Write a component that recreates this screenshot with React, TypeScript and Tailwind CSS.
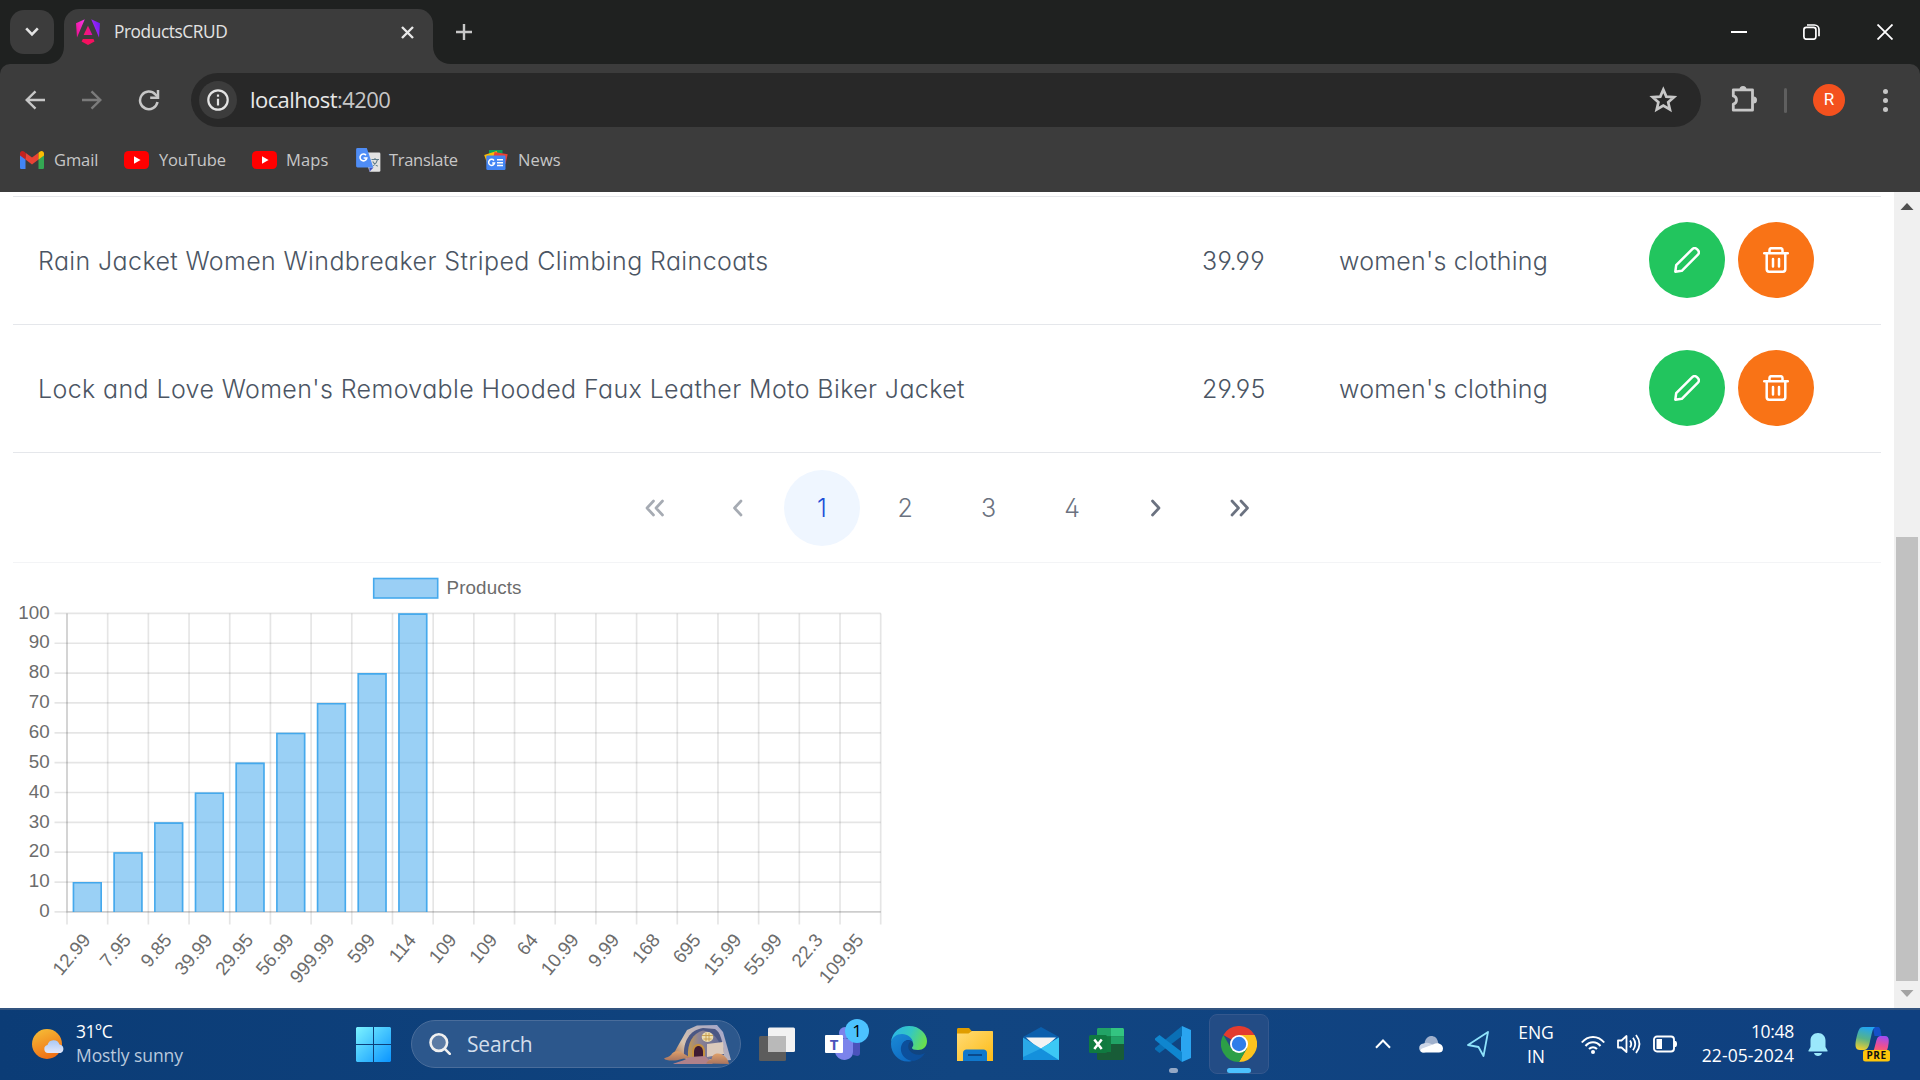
import React from "react";

const UI = "font-['Open_Sans','Noto_Sans',sans-serif]";

/* ---------- Browser chrome ---------- */

function AngularLogo() {
  return (
    <svg className="h-[26px] w-6" viewBox="0 0 24 26">
      <defs>
        <linearGradient id="ng1" x1="0" y1="0.6" x2="1" y2="0.3">
          <stop offset="0" stopColor="#f0149a" />
          <stop offset="0.45" stopColor="#f637e3" />
          <stop offset="0.6" stopColor="#b52cf0" />
          <stop offset="1" stopColor="#6d1af5" />
        </linearGradient>
        <linearGradient id="ng2" x1="0" y1="0" x2="1" y2="0.3">
          <stop offset="0" stopColor="#ff1f4e" />
          <stop offset="1" stopColor="#e30fa8" />
        </linearGradient>
      </defs>
      <path d="M8.8.3 0 4.2l1 14.4L8.8.3Z M15.2.3 24 4.2l-1 14.4L15.2.3Z" fill="url(#ng1)" />
      <path d="M12 6.8 16.4 16H7.6Z" fill="url(#ng2)" />
      <path d="M6.900 20h10.600l1 2.400L12 26l-6.400-3.600Z" fill="#f5105f" />
    </svg>
  );
}

function TabStrip() {
  return (
    <div className="flex h-16 items-start bg-[#1f2120]">
      <button className="mt-[10px] ml-[10px] flex h-11 w-11 items-center justify-center rounded-[14px] bg-[#3c3c3c]">
        <svg className="h-[10px] w-[14px]" viewBox="0 0 14 10" fill="none" stroke="#e3e3e3" strokeWidth="2.6">
          <path d="m1.2 1.4 5.8 5.9 5.8-5.9" />
        </svg>
      </button>
      <svg className="mt-[46px] -ml-[7px] h-[18px] w-[17px]" viewBox="0 0 17 18">
        <path d="M17 0v18H0C10 18 17 11 17 0Z" fill="#3c3c3c" />
      </svg>
      <div className="mt-[9px] flex h-[55px] w-[369px] items-center rounded-t-[15px] bg-[#3c3c3c] pb-[9px]">
        <div className="ml-[12px]">
          <AngularLogo />
        </div>
        <span className="ml-[14px] flex-1 text-[17.3px] tracking-[-0.42px] text-[#e3e3e3]">ProductsCRUD</span>
        <svg className="mr-[19px] h-[13px] w-[13px]" viewBox="0 0 13 13" stroke="#e8e8e8" strokeWidth="2.4">
          <path d="m1 1 11 11M12 1 1 12" />
        </svg>
      </div>
      <svg className="mt-[46px] h-[18px] w-[18px]" viewBox="0 0 18 18">
        <path d="M0 0v18h18C8 18 0 11 0 0Z" fill="#3c3c3c" />
      </svg>
      <svg className="mt-6 ml-[5px] h-4 w-4" viewBox="0 0 16 16" stroke="#c7c7c7" strokeWidth="2.4">
        <path d="M8 0v16M0 8h16" />
      </svg>
      <div className="mt-6 mr-[27px] ml-auto flex">
        <svg className="mr-14 h-4 w-4" viewBox="0 0 16 16">
          <path d="M0 7h16v2H0z" fill="#fff" />
        </svg>
        <svg className="mr-[57px] h-4 w-[17px]" viewBox="0 0 17 16" fill="none" stroke="#fff" strokeWidth="1.7">
          <rect x="0.9" y="3.4" width="12" height="11.8" rx="2.4" />
          <path d="M4 1h7.4A4.6 4.6 0 0 1 16 5.600v6.600" />
        </svg>
        <svg className="h-4 w-4" viewBox="0 0 16 16" stroke="#fff" strokeWidth="1.8">
          <path d="m.5.5 15 15M15.500.5l-15 15" />
        </svg>
      </div>
    </div>
  );
}

function Toolbar() {
  return (
    <div className="flex h-[72px] items-center rounded-t-[10px] bg-[#3c3c3c]">
      <svg className="ml-[25px] h-5 w-5" viewBox="0 0 20 20" fill="none" stroke="#c7c7c7" strokeWidth="2.4">
        <path d="M20 10H2M10.500 1.300 1.700 10l8.800 8.700" />
      </svg>
      <svg className="ml-[37px] h-5 w-5" viewBox="0 0 20 20" fill="none" stroke="#7b7b7b" strokeWidth="2.4">
        <path d="M0 10h18M9.500 1.300 18.300 10l-8.800 8.700" />
      </svg>
      <svg className="ml-[36px] h-[22px] w-[22px]" viewBox="0 0 22 22" fill="none" stroke="#c7c7c7" strokeWidth="2.5">
        <path d="M19.500 13a8.800 8.800 0 1 1-2.200-7.600l2 2" />
        <path d="M20 1v7.800h-7.800" />
      </svg>
      <div className="ml-[31px] flex h-[54px] w-[1510px] items-center rounded-full bg-[#282828] pr-[24px] pl-2">
        <div className="flex h-[38px] w-[38px] items-center justify-center rounded-full bg-[#3c3c3c]">
          <svg className="h-[22px] w-[22px]" viewBox="0 0 22 22" fill="none" stroke="#e3e3e3" strokeWidth="2.2">
            <circle cx="11" cy="11" r="9.700" />
            <path d="M11 9.800V16.500M11 5.500v2.300" />
          </svg>
        </div>
        <span className="ml-[13px] flex-1 pb-px text-[22px] tracking-[-0.58px] text-[#e8e8e8]">
          localhost<span className="text-[#c7c7c7]">:4200</span>
        </span>
        <svg className="h-[28px] w-[28px]" viewBox="0 0 28 28" fill="none" stroke="#c7c7c7" strokeWidth="2.700">
          <path d="m14.300 3.600 3 7 7.600.6-5.700 5 1.700 7.300-6.600-3.900-6.600 3.900 1.700-7.300-5.700-5 7.600-.6Z" />
        </svg>
      </div>
      <svg className="-mt-[3px] ml-[29px] h-7 w-7" viewBox="0 0 28 28">
        <path d="M3.300 4.800h19.200v20.400H3.300v-6.100c2-.5 3.200-2 3.200-4.100s-1.200-3.600-3.200-4.100Z" fill="none" stroke="#c7c7c7" strokeWidth="2.800" strokeLinejoin="round" />
        <path d="M9.500 4.500a3.500 3.500 0 0 1 7 0ZM23.500 11.500a3.500 3.500 0 0 1 0 7Z" fill="#c7c7c7" />
      </svg>
      <div className="ml-[26px] h-[25px] w-[3px] rounded-full bg-[#5f5f5f]" />
      <div className="ml-[26px] flex h-8 w-8 items-center justify-center rounded-full bg-[#f4511e] font-[Roboto] text-[17px] text-white">
        R
      </div>
      <div className="ml-[38px] flex flex-col gap-1">
        <i className="h-[5px] w-[5px] rounded-full bg-[#c7c7c7]" />
        <i className="h-[5px] w-[5px] rounded-full bg-[#c7c7c7]" />
        <i className="h-[5px] w-[5px] rounded-full bg-[#c7c7c7]" />
      </div>
    </div>
  );
}

function GmailIcon() {
  return (
    <svg className="h-[18px] w-6" viewBox="0 0 24 18">
      <path d="M0 2v14.400C0 17.300.7 18 1.600 18H5.500V7Z" fill="#4285f4" />
      <path d="M24 2v14.400c0 .9-.7 1.600-1.600 1.600H18.500V7Z" fill="#34a853" />
      <path d="M5.500 1.700 12 6.600l6.500-4.900v6.900L12 13.400 5.500 8.600Z" fill="#ea4335" />
      <path d="M0 2.500v2l5.500 4.100V1.700L4 .6C2.300-.7 0 .4 0 2.500Z" fill="#c5221f" />
      <path d="M24 2.500v2l-5.500 4.100V1.700L20 .6c1.700-1.300 4-.2 4 1.900Z" fill="#fbbc04" />
    </svg>
  );
}

function YouTubeIcon() {
  return (
    <svg className="h-[18px] w-[25px]" viewBox="0 0 25 18">
      <rect width="25" height="18" rx="4.500" fill="#f00" />
      <path d="m10 5.200 6.600 3.800-6.600 3.800Z" fill="#fff" />
    </svg>
  );
}

function TranslateIcon() {
  return (
    <svg className="h-6 w-[25px]" viewBox="0 0 25 24">
      <path d="M8 4.500h15a1.400 1.400 0 0 1 1.400 1.400v16.500A1.400 1.400 0 0 1 23 23.800h-9.500Z" fill="#e2e2e2" />
      <path d="M13.300 19.500h4.200l-4 4.300Z" fill="#3f51c1" />
      <path d="M1.500 0h9.300l6.500 19.500H1.500A1.400 1.400 0 0 1 .1 18.100V1.400A1.400 1.400 0 0 1 1.500 0Z" fill="#4f8df6" />
      <path d="M10 7.200A3.400 3.400 0 1 0 10.800 10H7.600" fill="none" stroke="#fff" strokeWidth="1.600" />
      <path d="M15.500 11.500H23M19 10v1.500M21.500 11.700c-.6 2.600-2.300 4.800-4.300 6M16.700 13.500c1 2 2.800 3.500 5 4.700" fill="none" stroke="#607d8b" strokeWidth="1.100" />
    </svg>
  );
}

function NewsIcon() {
  return (
    <svg className="h-5 w-6" viewBox="0 0 24 20">
      <path d="M5 0h13.500v6H5Z" fill="#0f9d58" />
      <path d="m.2 5 12.500-4 2 7L3 13Z" fill="#fbbc04" />
      <path d="m10.500 2 13.200 2.200L21.500 14 9 9Z" fill="#ea4335" />
      <rect x="2.300" y="5.500" width="19.200" height="14.500" rx="1.200" fill="#4285f4" />
      <path d="M10 10.500a3 3 0 1 0 .6 2.400H8.200M13 9.800h6M13 12.700h6M13 15.600h6" fill="none" stroke="#fff" strokeWidth="1.500" />
    </svg>
  );
}

function Bookmarks() {
  const cls = "flex items-center text-[16.5px] text-[#c7c7c7]";
  return (
    <div className="flex h-14 items-center bg-[#3c3c3c] pb-2">
      <div className={`${cls} ml-5 w-[104px] gap-[10px] tracking-[-0.1px]`}>
        <GmailIcon />
        Gmail
      </div>
      <div className={`${cls} w-[128px] gap-[10px] tracking-[-0.15px]`}>
        <YouTubeIcon />
        YouTube
      </div>
      <div className={`${cls} w-[104px] gap-[9px] tracking-[0.15px]`}>
        <YouTubeIcon />
        Maps
      </div>
      <div className={`${cls} w-[128px] gap-[8px] tracking-[-0.3px]`}>
        <TranslateIcon />
        Translate
      </div>
      <div className={`${cls} gap-[10px] tracking-[0.1px]`}>
        <NewsIcon />
        News
      </div>
    </div>
  );
}

/* ---------- Page content ---------- */

const rows = [
  { title: "Rain Jacket Women Windbreaker Striped Climbing Raincoats", price: "39.99", category: "women's clothing" },
  { title: "Lock and Love Women's Removable Hooded Faux Leather Moto Biker Jacket", price: "29.95", category: "women's clothing" },
];

function PencilIcon() {
  return (
    <svg className="h-[26px] w-[26px]" viewBox="0 0 26 26" fill="none" stroke="#fff" strokeWidth="2.500" strokeLinejoin="round">
      <path d="M1.300 24.700 2.200 18.200 18.300 2.100c1.400-1.400 3.400-1.200 4.600 0l1 1c1.200 1.200 1.400 3.200 0 4.600L7.800 23.800Z" />
    </svg>
  );
}

function TrashIcon() {
  return (
    <svg className="h-[26px] w-[26px]" viewBox="0 0 26 26" fill="none" stroke="#fff" strokeWidth="2.500" strokeLinecap="round" strokeLinejoin="round">
      <path d="M1.200 6.300h23.600M6.500 6V3c0-1 .8-1.800 1.800-1.800h9.400c1 0 1.800.8 1.800 1.800v3M3.700 6.500v15.800c0 1.300 1 2.400 2.400 2.400h13.800c1.300 0 2.400-1 2.400-2.400V6.500M10 12v7.500M16 12v7.500" />
    </svg>
  );
}

function ProductRows() {
  return (
    <div className="border-t border-[#e5e7eb]">
      {rows.map((r) => (
        <div key={r.title} className="flex h-32 items-center border-b border-[#e5e7eb] pl-[25px] text-[25px] font-[350] text-[#4b5563]">
          <span className="w-[1164px] pt-[2px] tracking-[0.38px]">{r.title}</span>
          <span className="w-[137px] pt-[2px] tracking-[0.25px]">{r.price}</span>
          <span className="w-[310px] pt-[2px] tracking-[0.23px]">{r.category}</span>
          <div className="flex gap-[13px] pb-[2px]">
            <button className="flex h-[76px] w-[76px] items-center justify-center rounded-full bg-[#22c55e]">
              <PencilIcon />
            </button>
            <button className="flex h-[76px] w-[76px] items-center justify-center rounded-full bg-[#f97316]">
              <TrashIcon />
            </button>
          </div>
        </div>
      ))}
    </div>
  );
}

function Angle({ d, color }: { d: string; color: string }) {
  return (
    <svg className="h-5 w-5" viewBox="0 0 20 20" fill="none" stroke={color} strokeWidth="2.700" strokeLinecap="round" strokeLinejoin="round">
      <path d={d} />
    </svg>
  );
}

function Paginator() {
  const cell = "flex h-[76px] w-[76px] items-center justify-center rounded-full";
  return (
    <div className="flex h-[110px] items-center justify-center gap-[7.4px] border-b border-[#f3f4f6] text-[25px] font-[350] text-[#6b7280]">
      <div className={cell}>
        <Angle color="#a6abb3" d="M8.500 3 2 10l6.500 7M17.500 3 11 10l6.500 7" />
      </div>
      <div className={cell}>
        <Angle color="#a6abb3" d="m12 3-6.500 7 6.500 7" />
      </div>
      <div className={`${cell} bg-[#eff6ff] pt-[3px] text-[#1d4ed8]`}>1</div>
      <div className={`${cell} pt-[3px]`}>2</div>
      <div className={`${cell} pt-[3px]`}>3</div>
      <div className={`${cell} pt-[3px]`}>4</div>
      <div className={cell}>
        <Angle color="#6b7280" d="m7.500 3 6.500 7-6.500 7" />
      </div>
      <div className={cell}>
        <Angle color="#6b7280" d="m3 3 6.500 7L3 17M12 3l6.500 7-6.500 7" />
      </div>
    </div>
  );
}

const labels = ["12.99", "7.95", "9.85", "39.99", "29.95", "56.99", "999.99", "599", "114", "109", "109", "64", "10.99", "9.99", "168", "695", "15.99", "55.99", "22.3", "109.95"];
const values = [10, 20, 30, 40, 50, 60, 70, 80, 100];

function Chart() {
  const left = 67;
  const right = 880.7;
  const top = 50.4;
  const bottom = 348.900;
  const step = (right - left) / 20;
  const yOf = (v: number) => bottom - ((bottom - top) * v) / 100;
  return (
    <svg className="-ml-[13px] h-[445px] w-[900px]" viewBox="0 0 900 445" fontFamily="'Liberation Sans', Arial, sans-serif" fontSize="18.800">
      {Array.from({ length: 11 }, (_, i) => (
        <g key={i}>
          <path d={`M54.500 ${yOf(i * 10)}H${right}`} stroke="#000" strokeOpacity="0.1" strokeWidth="1.700" />
          <text x="49.600" y={yOf(i * 10) + 5.2} textAnchor="end" fill="#6c6c6c">
            {i * 10}
          </text>
        </g>
      ))}
      {Array.from({ length: 21 }, (_, i) => (
        <path key={i} d={`M${left + i * step} ${top}V361.500`} stroke="#000" strokeOpacity="0.1" strokeWidth="1.700" />
      ))}
      <path d={`M${left} ${top}V${bottom}H${right}`} fill="none" stroke="#000" strokeOpacity="0.1" strokeWidth="1.700" />
      {values.map((v, i) => {
        const x = left + (i + 0.5) * step - 14.6;
        const y = yOf(v);
        return (
          <g key={i}>
            <rect x={x} y={y} width="29.200" height={bottom - y} fill="#36a2eb" fillOpacity="0.5" />
            <path d={`M${x + 0.75} ${bottom}V${y + 0.75}h27.700V${bottom}`} fill="none" stroke="#36a2eb" strokeOpacity="0.85" strokeWidth="1.600" />
          </g>
        );
      })}
      {labels.map((l, i) => (
        <text key={i} transform={`translate(${left + (i + 0.5) * step - 1} ${373.2}) rotate(-50)`} textAnchor="end" dy="0.350em" fill="#6c6c6c">
          {l}
        </text>
      ))}
      <rect x="373.700" y="15.500" width="64" height="19.500" fill="#9acff5" stroke="#45a9ed" strokeWidth="1.600" />
      <text x="446.500" y="31" fill="#6c6c6c" textLength="75">
        Products
      </text>
    </svg>
  );
}

function Scrollbar() {
  return (
    <div className="flex w-[26px] flex-col items-center bg-[#f0f0f0]">
      <svg className="mt-[11px] h-[7px] w-[14px]" viewBox="0 0 14 7">
        <path d="M7 0l6.500 7H.5Z" fill="#505050" />
      </svg>
      <div className="mt-[327px] h-[444px] w-[22px] bg-[#c1c1c1]" />
      <svg className="mt-[9px] h-[7px] w-[14px]" viewBox="0 0 14 7">
        <path d="M7 7l6.500-7H.5Z" fill="#a3a3a3" />
      </svg>
    </div>
  );
}

/* ---------- Taskbar ---------- */

function Weather() {
  return (
    <div className="flex items-center">
      <svg className="ml-8 h-[30px] w-[34px]" viewBox="0 0 34 30">
        <defs>
          <linearGradient id="sun" x1="0.300" y1="0" x2="0.700" y2="1">
            <stop offset="0" stopColor="#f5b935" />
            <stop offset="1" stopColor="#f06a12" />
          </linearGradient>
          <linearGradient id="cl" x1="0" y1="0" x2="0" y2="1">
            <stop offset="0" stopColor="#a9c8f5" />
            <stop offset="1" stopColor="#e3e8fa" />
          </linearGradient>
        </defs>
        <circle cx="15" cy="15" r="15" fill="url(#sun)" />
        <path d="M16 24a4 4 0 0 1-.5-7.900 6.200 6.200 0 0 1 12-.6A4.400 4.400 0 0 1 28.500 24Z" fill="url(#cl)" />
      </svg>
      <div className="ml-[10px] pb-[2px] text-[17.500px] leading-6">
        <div className="tracking-[-0.6px] text-white">31°C</div>
        <div className="tracking-[-0.08px] text-[#b9c9dd]">Mostly sunny</div>
      </div>
    </div>
  );
}

function SearchBox() {
  return (
    <div className="ml-5 flex h-12 w-[330px] items-center rounded-full border border-[#4a6d9b] bg-[#2c578c] pl-[17px]">
      <svg className="h-[22px] w-[22px]" viewBox="0 0 22 22" fill="none" stroke="#f0f0f0" strokeWidth="2.600" strokeLinecap="round">
        <circle cx="9.800" cy="9.600" r="8.300" fill="#5b7ba5" />
        <path d="m15.800 15.800 5 5" />
      </svg>
      <span className="ml-4 flex-1 pt-px text-[21px] tracking-[-0.15px] text-[#d3deeb]">Search</span>
      <svg className="mr-[9px] h-[39px] w-[67px]" viewBox="0 0 67 39">
        <defs>
          <linearGradient id="rock" x1="0" y1="0.800" x2="1" y2="0.200">
            <stop offset="0" stopColor="#b57d55" />
            <stop offset="0.250" stopColor="#d9c3ae" />
            <stop offset="0.600" stopColor="#b9b2bb" />
            <stop offset="1" stopColor="#a3a6cc" />
          </linearGradient>
          <linearGradient id="wall" x1="0" y1="0" x2="1" y2="0">
            <stop offset="0" stopColor="#c79a4c" />
            <stop offset="0.300" stopColor="#8f8494" />
            <stop offset="1" stopColor="#5d6795" />
          </linearGradient>
          <linearGradient id="sand" x1="0" y1="0" x2="0" y2="1">
            <stop offset="0" stopColor="#e0a06a" />
            <stop offset="1" stopColor="#a8745f" />
          </linearGradient>
        </defs>
        <path d="M10 28 15 19 23 5 33 .500 53 0 59 7 67 35 58 36 22 34Z" fill="url(#rock)" />
        <path d="M20 31C19 16 26 5 39 3l12 1c5 3 8 12 9 26L40 36Z" fill="#4b5784" />
        <path d="M24 32C23 18 29 8 39 5.500c10 1 17 8 20 24l-18 6Z" fill="url(#wall)" />
        <path d="M43 19 59 17 60 29 43 32Z" fill="#dccabb" />
        <ellipse cx="43.500" cy="12" rx="5.800" ry="5" fill="#ecdcae" />
        <path d="M38 10.500h11M39.500 14h8M42 8v8M45 8v8" stroke="#c59a4a" strokeWidth="0.900" />
        <path d="M28 33v-6c0-11 13-11 13 0v6Z" fill="#c5903f" />
        <path d="M30 33v-6c0-8 9-8 9 0v6Z" fill="#3f1a33" />
        <path d="M9 39c3-2 12-3 16-7l16-1 8 8Z" fill="#b0818a" />
        <path d="M0 33.500c3-1.500 6-1.500 8-5 3-3 8-3 11 0 3 1 5 3 7 4.500-8 0-12 3-18 2.500C4 35.500 1 35 0 33.500Z" fill="url(#sand)" />
        <path d="M42 38.500c2-3 4-4 6-5 0-5 6-6 10-4 3 2 6 4 7 9.500Z" fill="url(#sand)" />
      </svg>
    </div>
  );
}

function AppIcon({ className, children }: { className: string; children: React.ReactNode }) {
  return (
    <svg className={`h-9 w-9 shrink-0 ${className}`} viewBox="0 0 36 36">
      {children}
    </svg>
  );
}

function TaskApps() {
  return (
    <>
      <AppIcon className="ml-[18px]">
        <rect x="0" y="10" width="27" height="25" rx="1.500" fill="#5c5c5c" />
        <rect x="9" y="1.500" width="27" height="24.500" rx="1.500" fill="#f2f2f2" />
        <path d="M9 10h18v16H9Z" fill="#b9b9b9" />
      </AppIcon>
      <svg className="mb-[10px] ml-[30px] h-[43px] w-[45px] shrink-0" viewBox="0 0 45 43">
        <path d="M24 17h11v18c0 4-4 3-7 2Z" fill="#4b53bc" />
        <circle cx="20" cy="15" r="6" fill="#7b83eb" />
        <path d="M10 21h18v13c0 10-16 11-18 0Z" fill="#7b83eb" />
        <rect x="0" y="17" width="18" height="18" rx="1" fill="#fff" />
        <text x="9" y="31.500" textAnchor="middle" fontSize="15" fontWeight="700" fill="#4b53bc" fontFamily="'Open Sans'">
          T
        </text>
        <circle cx="32" cy="13" r="12" fill="#4cc2ff" />
        <text x="32" y="19" textAnchor="middle" fontSize="17" fill="#000" fontFamily="'Open Sans'">
          1
        </text>
      </svg>
      <AppIcon className="ml-[21px]">
        <defs>
          <linearGradient id="e1" x1="0" y1="0.300" x2="1" y2="0.600">
            <stop offset="0" stopColor="#2bb5e8" />
            <stop offset="0.500" stopColor="#35c8c0" />
            <stop offset="1" stopColor="#6be04a" />
          </linearGradient>
          <linearGradient id="e2" x1="0" y1="0" x2="0.600" y2="1">
            <stop offset="0" stopColor="#1a8ad6" />
            <stop offset="1" stopColor="#0f6cc4" />
          </linearGradient>
        </defs>
        <path d="M0 16C1 6 9 0 18 0c11 0 18 8 18 15 0 6-4 9-9 9-4 0-6-1-6-2s2-2 1-5c-1-4-5-7-11-7C6 10 2 12 0 16Z" fill="url(#e1)" />
        <path d="M0 18c0-7 6-10 11-10 6 0 10 4 11 8-2-2-6-3-9 0-4 4-2 14 8 19-11 3-21-6-21-17Z" fill="url(#e2)" />
        <path d="M14 15c-8 5-4 20 9 20 4-1 8-3 11-8-5 3-12 2-15-2-3-3-2-8 1-10-2-1-4-1-6 0Z" fill="#0c4f9c" />
      </AppIcon>
      <AppIcon className="ml-[30px]">
        <path d="M0 3.500C0 2.500.7 2 1.500 2H12l3.500 4L12 8H0Z" fill="#e09d00" />
        <path d="M0 7.500h11.500L15 5h20c.6 0 1 .4 1 1v29H0Z" fill="url(#fold)" />
        <path d="M6 35v-8c0-2 1.500-3.500 3.500-3.500h17c2 0 3.500 1.500 3.500 3.500v8Z" fill="#1078cc" />
        <path d="M11 29h14" stroke="#0a4a8c" strokeWidth="2" />
        <defs>
          <linearGradient id="fold" x1="0" y1="0" x2="1" y2="1">
            <stop offset="0" stopColor="#ffdb75" />
            <stop offset="1" stopColor="#fdbb16" />
          </linearGradient>
        </defs>
      </AppIcon>
      <AppIcon className="ml-[30px]">
        <path d="M0 11 18 1l18 10-9 8H9Z" fill="#0b5fad" />
        <path d="M3 11.500h30L18 25Z" fill="#f3f3f3" />
        <path d="M0 11.500 18 22.500l18-11V34H0Z" fill="#2aa9e8" />
        <path d="M18 22.500 36 34H0V31Z" fill="#1490dc" />
        <path d="M18 22.500l18-11V34Z" fill="#3cc8f5" />
      </AppIcon>
      <AppIcon className="ml-[30px]">
        <rect x="8" y="2" width="27" height="32" rx="1.500" fill="#185c37" />
        <path d="M8 3.500C8 2.500 8.700 2 9.500 2H22v8.500H8Z" fill="#21a366" />
        <path d="M22 2h11.500c.8 0 1.500.6 1.500 1.500v7H22Z" fill="#33c481" />
        <path d="M22 10.500h13V18H22Z" fill="#21a366" />
        <path d="M8 10.500h14V26H8Z" fill="#107c41" />
        <rect x="0" y="9" width="18" height="18" rx="1.500" fill="#0f7a40" />
        <path d="m5.300 13.500 7.400 9.600M12.700 13.500l-7.400 9.600" stroke="#fff" strokeWidth="2.500" />
      </AppIcon>
      <div className="ml-[30px] flex h-[60px] flex-col items-center pt-3">
        <AppIcon className="">
          <path d="M27 0 36 4v28l-9 4-1-10V10Z" fill="#2aa5f0" />
          <path d="M27 0v10L4.500 27 0 23.500V22Z" fill="#0a6fb5" />
          <path d="M27 36V26L4.500 9 0 12.500V14Z" fill="#0f86cf" />
        </AppIcon>
        <div className="mt-[6px] h-[5px] w-[9px] rounded-full bg-[#95a8c5]" />
      </div>
      <div className="ml-[18px] flex h-[60px] w-[60px] flex-col items-center rounded-lg border border-[#34588e] bg-[#234c85] pt-[11px]">
        <AppIcon className="">
          <path d="M18 18 2.400 9A18 18 0 0 1 33.600 9Z" fill="#e33b2e" />
          <path d="M18 9h15.600A18 18 0 0 1 18 36l7.800-13.500Z" fill="#fcc31e" />
          <path d="M10.200 22.500 2.400 9A18 18 0 0 0 18 36l7.800-13.500Z" fill="#2c9f47" />
          <circle cx="18" cy="18" r="9" fill="#fff" />
          <circle cx="18" cy="18" r="7.200" fill="#2f7de9" />
        </AppIcon>
        <div className="mt-[6px] h-[5px] w-6 shrink-0 rounded-full bg-[#4cc2ff]" />
      </div>
    </>
  );
}

function Tray() {
  return (
    <div className="ml-auto flex items-center text-[17.500px] leading-6 text-white">
      <svg className="h-[10px] w-4" viewBox="0 0 16 10" fill="none" stroke="#fff" strokeWidth="2">
        <path d="m1 8.800 7-7.300 7 7.300" />
      </svg>
      <svg className="ml-7 h-[18px] w-6" viewBox="0 0 24 18">
        <path d="M6 14C4 6 8 1 12 1c4 0 6 2 7 6l1 6Z" fill="#9fb0cc" />
        <path d="M5 17.500c-6 0-6.500-8.500-.5-9 4-2 7 0 9 1l7 4Z" fill="#ccd5e6" />
        <path d="M4 17.500c-3 0-3-3-1-4L14 9.500c5-3 10 0 10 4 0 3-2 4-4 4Z" fill="#fff" />
      </svg>
      <svg className="ml-6 h-[26px] w-[22px]" viewBox="0 0 22 26" fill="none" stroke="#8fe3fb" strokeWidth="1.800" strokeLinejoin="round">
        <path d="M21 1 1 14l10.500 2L16.500 25Z" />
      </svg>
      <div className="ml-[28px] w-[38px] text-center tracking-[-0.1px]">
        <div>ENG</div>
        <div>IN</div>
      </div>
      <svg className="ml-[26px] h-[19px] w-6" viewBox="0 0 24 19" fill="none" stroke="#fff" strokeWidth="2">
        <path d="M.8 7.500c6-7.500 16.400-7.500 22.400 0M4.500 11c4.200-5 10.800-5 15 0M8 14c2.400-2.500 5.600-2.500 8 0" />
        <circle cx="12" cy="17" r="2" fill="#fff" stroke="none" />
      </svg>
      <svg className="ml-3 h-5 w-6" viewBox="0 0 24 20" fill="none" stroke="#fff" strokeWidth="1.800" strokeLinejoin="round">
        <path d="M1 6.500h3.500L9.500 2v16l-5-4.500H1ZM13 6.500q2.500 3.500 0 7M16 3.800q4.500 6.200 0 12.400M19 1q7 9 0 18" />
      </svg>
      <svg className="ml-3 h-[18px] w-6" viewBox="0 0 24 18" fill="none" stroke="#fff" strokeWidth="1.900">
        <rect x="1" y="1.500" width="20" height="15" rx="3" />
        <path d="M3.500 4h5.500v10H3.500Z" fill="#fff" stroke="none" />
        <path d="M21 6h1.500c2 0 2 6 0 6H21Z" fill="#fff" stroke="none" />
      </svg>
      <div className="ml-5 w-[97px] pb-[3px] text-right">
        <div className="tracking-[-0.3px]">10:48</div>
        <div className="tracking-[0.1px]">22-05-2024</div>
      </div>
      <svg className="ml-[14px] h-[23px] w-5" viewBox="0 0 20 23" fill="#9be8fb">
        <path d="M10 0c4.500 0 7.500 3.300 7.500 7.500V14l2 3.500c.2.600 0 1-.7 1H1.200c-.7 0-.9-.4-.7-1L2.500 14V7.500C2.500 3.300 5.500 0 10 0ZM6 20h8c-.6 4-7.400 4-8 0Z" />
      </svg>
      <svg className="mr-[30px] ml-[27px] h-[35px] w-[35px]" viewBox="0 0 35 35">
        <defs>
          <linearGradient id="c1" x1="0.500" y1="0" x2="0.300" y2="1">
            <stop offset="0" stopColor="#22a5f0" />
            <stop offset="0.500" stopColor="#57b389" />
            <stop offset="1" stopColor="#f3cf2c" />
          </linearGradient>
          <linearGradient id="c2" x1="0.500" y1="0" x2="0.300" y2="1">
            <stop offset="0" stopColor="#a24df0" />
            <stop offset="0.500" stopColor="#ee4f8f" />
            <stop offset="1" stopColor="#ff7b4a" />
          </linearGradient>
        </defs>
        <path d="M18 0h5c2 0 2.500 2 3.500 9h-7Z" fill="#1450c8" />
        <path d="M8 0h12c-3 2-3 7-5 14-1 6-3 9-6 9H5c-5 0-5-5-4-10C3 4 4 0 8 0Z" fill="url(#c1)" />
        <path d="M26 9h4c5 0 4 6 3 11-1 4-3 8-6 8H14c5-2 5-6 7-13 1-4 2-6 5-6Z" fill="url(#c2)" />
        <rect x="8" y="23" width="27" height="11.500" rx="2.500" fill="#fdc60b" />
        <text x="21.500" y="32.300" textAnchor="middle" fontSize="10" fontWeight="700" letterSpacing="0.500" fill="#111" fontFamily="'Open Sans'">
          PRE
        </text>
      </svg>
    </div>
  );
}

function Taskbar() {
  return (
    <div className="flex h-[72px] items-center border-t-2 border-[#33547f] bg-linear-to-r from-[#0b3c76] via-[#114581] to-[#0f4080] pb-[2px]">
      <div className="w-[356px]">
        <Weather />
      </div>
      <svg className="h-[35px] w-[35px] shrink-0" viewBox="0 0 35 35">
        <defs>
          <linearGradient id="win" x1="0" y1="0" x2="1" y2="1">
            <stop offset="0" stopColor="#7cf3ff" />
            <stop offset="1" stopColor="#0a94ff" />
          </linearGradient>
        </defs>
        <path d="M1 0h16v17H0V1ZM18 0h16l1 1v16H18ZM0 18h17v17H1l-1-1ZM18 18h17v16l-1 1H18Z" fill="url(#win)" />
      </svg>
      <SearchBox />
      <TaskApps />
      <Tray />
    </div>
  );
}

export default function App() {
  return (
    <div className={`flex h-[1080px] w-[1920px] flex-col overflow-hidden bg-white ${UI}`}>
      <TabStrip />
      <div className="bg-[#1f2120]">
        <Toolbar />
      </div>
      <Bookmarks />
      <div className="flex h-[816px] overflow-hidden">
        <main className="flex-1 overflow-hidden pt-1 pr-[13px] pl-[13px] font-[Inter,sans-serif] [font-feature-settings:'cv11','cv02','cv03','cv04']">
          <ProductRows />
          <Paginator />
          <Chart />
        </main>
        <Scrollbar />
      </div>
      <Taskbar />
    </div>
  );
}
